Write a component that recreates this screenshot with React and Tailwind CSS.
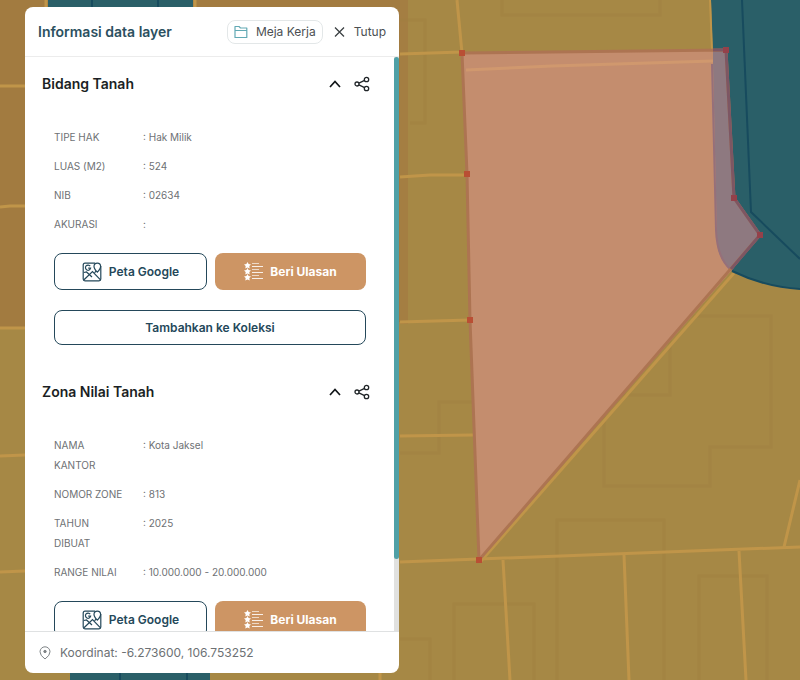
import React, { useState } from "react";

const bidangTanah = [
  ["TIPE HAK", "Hak Milik"],
  ["LUAS (M2)", "524"],
  ["NIB", "02634"],
  ["AKURASI", ""],
];

const zonaNilai = [
  ["NAMA KANTOR", "Kota Jaksel"],
  ["NOMOR ZONE", "813"],
  ["TAHUN DIBUAT", "2025"],
  ["RANGE NILAI", "10.000.000 - 20.000.000"],
];

const vertices = [
  [462, 53],
  [726, 50],
  [734, 198],
  [760, 235],
  [479, 560],
  [470, 320],
  [467, 174],
];

function ParcelMap() {
  return (
    <svg
      className="absolute inset-0 h-full w-full"
      viewBox="0 0 800 680"
      preserveAspectRatio="xMinYMin slice"
      aria-hidden="true"
    >
      <rect width="800" height="680" fill="#a68845" />
      <path d="M0 0H400V322L0 328Z" fill="#a27b40" />
      <path d="M400 0H408V324H400Z" fill="#a47e42" />

      {/* building footprints */}
      <g fill="none" stroke="#a07f40" strokeWidth="3" opacity="0.4">
        <path d="M502 0V15H660V0" />
        <path d="M400 20H425V123H410" />
        <path d="M400 453H439V402H485V335" />
        <path d="M604 400V486H710V447H771V316H670V395H622" />
        <path d="M557 680V520H664V680" />
        <path d="M454 680V604H534V680" />
        <path d="M699 680V576H767V680" />
        <path d="M400 639H430V680" />
      </g>

      {/* parcel boundaries */}
      <g fill="none" stroke="#c09549" strokeWidth="3">
        <path d="M0 86H25M0 207L10 206H25M0 328H25M0 456L25 455M0 572L25 571M400 562L479 559L800 547" />
        <path d="M457 0L462 53M400 54L462 52M400 177L430 175H467M400 322L470 320M400 436L473 435" />
        <path d="M734 273L481 561" />
        <path d="M503 560L510 680M624 555L629 680M739 551L746 680M800 480L784 547" />
        <path d="M46 0V8M195 0V8M380 670V680" />
      </g>

      {/* roads */}
      <path d="M711 0L713 60L715 235Q716 263 732 271Q765 287 800 289V0Z" fill="#2a5f68" />
      <path d="M710 0L712 50" stroke="#c09549" strokeWidth="2" />
      <path d="M48 0H193V10H48ZM70 670H210V680H70Z" fill="#2a5f68" />
      <path d="M742 0L751 212L800 259M92 0V10M158 0V10M120 670V680M187 670V680" fill="none" stroke="#174b5e" strokeWidth="2" />
      <path d="M732 271Q765 287 800 289" fill="none" stroke="#174b5e" strokeWidth="2" />

      {/* selected parcel */}
      <path
        d="M462 53L726 50L734 198L760 235L732 270L479 560L470 320L467 174Z"
        fill="#c48d6e"
      />
      <path d="M713 50H726L734 198L760 235L731 270Q717 258 717 240L713 63Z" fill="#8e7980" />
      <path d="M466 70L552 66L713 61" fill="none" stroke="#d0986e" strokeWidth="3" />
      <path d="M712 64L716 230Q717 258 731 270" fill="none" stroke="#96707a" strokeWidth="2" />
      <path
        d="M462 53L726 50L734 198L760 235L479 560L470 320L467 174Z"
        fill="none"
        stroke="#ad7452"
        strokeWidth="3"
      />
      <path d="M713 50L726 50L734 198L760 235L731 269" fill="none" stroke="#7d5663" strokeWidth="3" />
      {vertices.map(([x, y]) => (
        <rect key={x} x={x - 3} y={y - 3} width="6" height="6" fill={x > 700 ? "#94414a" : "#b94f34"} />
      ))}
    </svg>
  );
}

function FolderIcon() {
  return (
    <svg width="14" height="14" viewBox="0 0 14 14" fill="none" stroke="#62a9b4" strokeWidth="1.2" aria-hidden="true">
      <path d="M1 12.5V1.5H5L6.5 3H12.8V12.5ZM1 5.5H12.8" strokeLinejoin="round" />
    </svg>
  );
}

function CloseIcon() {
  return (
    <svg width="12" height="12" viewBox="0 0 12 12" stroke="#3c4143" strokeWidth="1.3" aria-hidden="true">
      <path d="M1 1.5L10 10.5M10 1.5L1 10.5" />
    </svg>
  );
}

function ChevronIcon({ open }) {
  return (
    <svg className={open ? "" : "rotate-180"} width="14" height="14" viewBox="0 0 14 14" fill="none" stroke="#111518" strokeWidth="1.7" aria-hidden="true">
      <path d="M2 10L7 4.5L12 10" />
    </svg>
  );
}

function ShareIcon() {
  return (
    <svg width="16" height="16" viewBox="0 0 16 16" fill="none" stroke="#202528" strokeWidth="1.3" aria-hidden="true">
      <circle cx="3" cy="8" r="2" />
      <circle cx="12.5" cy="3.5" r="2.2" />
      <circle cx="12.5" cy="12.5" r="2.2" />
      <path d="M4.9 7.2L10.6 4.4M4.9 8.8L10.6 11.6" />
    </svg>
  );
}

function MapPhotoIcon() {
  return (
    <svg width="20" height="20" viewBox="0 0 20 20" fill="none" stroke="#24485a" strokeWidth="1.2" aria-hidden="true">
      <path d="M13 1.2H3Q1.2 1.2 1.2 3V17Q1.2 18.8 3 18.8H17Q18.8 18.8 18.8 17V4" />
      <path d="M2 17.8L10.5 9.5L18.5 17.8M1.8 10.5L4.5 10L10 15" />
      <path d="M8.2 4.2A2.6 2.6 0 1 0 8.6 6.2H6.2" />
      <path d="M15.3 10.2Q12 6.6 12 4.4A3.3 3.3 0 0 1 18.6 4.4Q18.6 6.6 15.3 10.2Z" />
      <path d="M12.5 10.8L14 9.2" />
    </svg>
  );
}

function ReviewIcon() {
  return (
    <svg width="19" height="19" viewBox="0 0 19 19" fill="white" aria-hidden="true">
      {[0, 6, 12].map((y) => (
        <g key={y} transform={`translate(0 ${y})`}>
          <path d="M3.5 0L4.6 2.1L7 2.5L5.3 4.1L5.7 6.6L3.5 5.4L1.3 6.6L1.7 4.1L0 2.5L2.4 2.1Z" />
          <path d="M8 1.3H15V2.1H8ZM8 4H19V5H8Z" opacity="0.85" />
        </g>
      ))}
    </svg>
  );
}

function PinIcon() {
  return (
    <svg width="12" height="14" viewBox="0 0 12 14" fill="none" stroke="#7d8285" strokeWidth="1" aria-hidden="true">
      <path d="M6 13Q1 9.5 1 5.8A5 5 0 0 1 11 5.8Q11 9.5 6 13Z" />
      <circle cx="6" cy="5.5" r="1.2" fill="#7d8285" />
    </svg>
  );
}

function LayerSection({ title, rows, children }) {
  const [open, setOpen] = useState(true);
  return (
    <section className="pb-[35px]">
      <div className="flex h-6 items-center justify-between pr-6 pl-[17px]">
        <h2 className="text-[14px] leading-6 font-semibold text-[#1b1f24]">{title}</h2>
        <div className="flex items-center gap-3">
          <button type="button" aria-label={`Ciutkan ${title}`} aria-expanded={open} onClick={() => setOpen(!open)}>
            <ChevronIcon open={open} />
          </button>
          <button type="button" aria-label={`Bagikan ${title}`}>
            <ShareIcon />
          </button>
        </div>
      </div>
      {open && (
        <div className="pt-[31px] pr-7 pl-[29px]">
          <dl className="flex flex-col gap-[9px] text-[10px] leading-5 text-[#6e7174]">
            {rows.map(([label, value]) => (
              <div key={label} className="flex">
                <dt className="w-[89px] shrink-0 pr-4">{label}</dt>
                <dd>: {value}</dd>
              </div>
            ))}
          </dl>
          <div className="mt-[19px] flex gap-2">
            <button
              type="button"
              className="flex h-[37px] flex-1 items-center justify-center gap-[7px] rounded-lg border border-[#24485a] text-[12px] font-semibold text-[#24485a]"
            >
              <MapPhotoIcon />
              Peta Google
            </button>
            <button
              type="button"
              className="flex h-[37px] flex-1 items-center justify-center gap-[7px] rounded-lg bg-[#cd9564] text-[12px] font-bold text-white"
            >
              <ReviewIcon />
              Beri Ulasan
            </button>
          </div>
          {children}
        </div>
      )}
    </section>
  );
}

function CollectionButton() {
  return (
    <button
      type="button"
      className="mt-5 h-[35px] w-full rounded-lg border border-[#24485a] text-[12px] font-semibold text-[#24485a]"
    >
      Tambahkan ke Koleksi
    </button>
  );
}

export default function App() {
  return (
    <main className="relative h-screen overflow-hidden py-[7px] pl-[25px] font-['Inter',sans-serif]">
      <ParcelMap />
      <aside className="relative flex h-full w-[374px] max-w-full flex-col overflow-hidden rounded-lg bg-white">
        <header className="flex h-[50px] shrink-0 items-center justify-between border-b border-[#ececec] px-[13px]">
          <h1 className="text-[14px] font-semibold text-[#2b5060]">Informasi data layer</h1>
          <div className="flex items-center gap-[11px] text-[12px] text-[#4b4f52]">
            <button type="button" className="flex h-6 items-center gap-2 rounded-lg border border-[#e3e7e8] px-1.5">
              <FolderIcon />
              Meja Kerja
            </button>
            <button type="button" className="flex items-center gap-2">
              <CloseIcon />
              Tutup
            </button>
          </div>
        </header>
        <div className="flex min-h-0 flex-1">
          <div className="min-w-0 flex-1 overflow-y-auto pt-[15px] [scrollbar-width:none]">
            <LayerSection title="Bidang Tanah" rows={bidangTanah}>
              <CollectionButton />
            </LayerSection>
            <LayerSection title="Zona Nilai Tanah" rows={zonaNilai}>
              <CollectionButton />
            </LayerSection>
          </div>
          <div className="w-[5px] shrink-0 bg-[#e1e1df]" aria-hidden="true">
            <div className="h-7/8 rounded-sm bg-[#4fa0a6]" />
          </div>
        </div>
        <footer className="flex h-[42px] shrink-0 items-center gap-[9px] border-t border-[#dfe1e2] px-3.5 text-[12px] text-[#6d7174]">
          <PinIcon />
          Koordinat: -6.273600, 106.753252
        </footer>
      </aside>
    </main>
  );
}
